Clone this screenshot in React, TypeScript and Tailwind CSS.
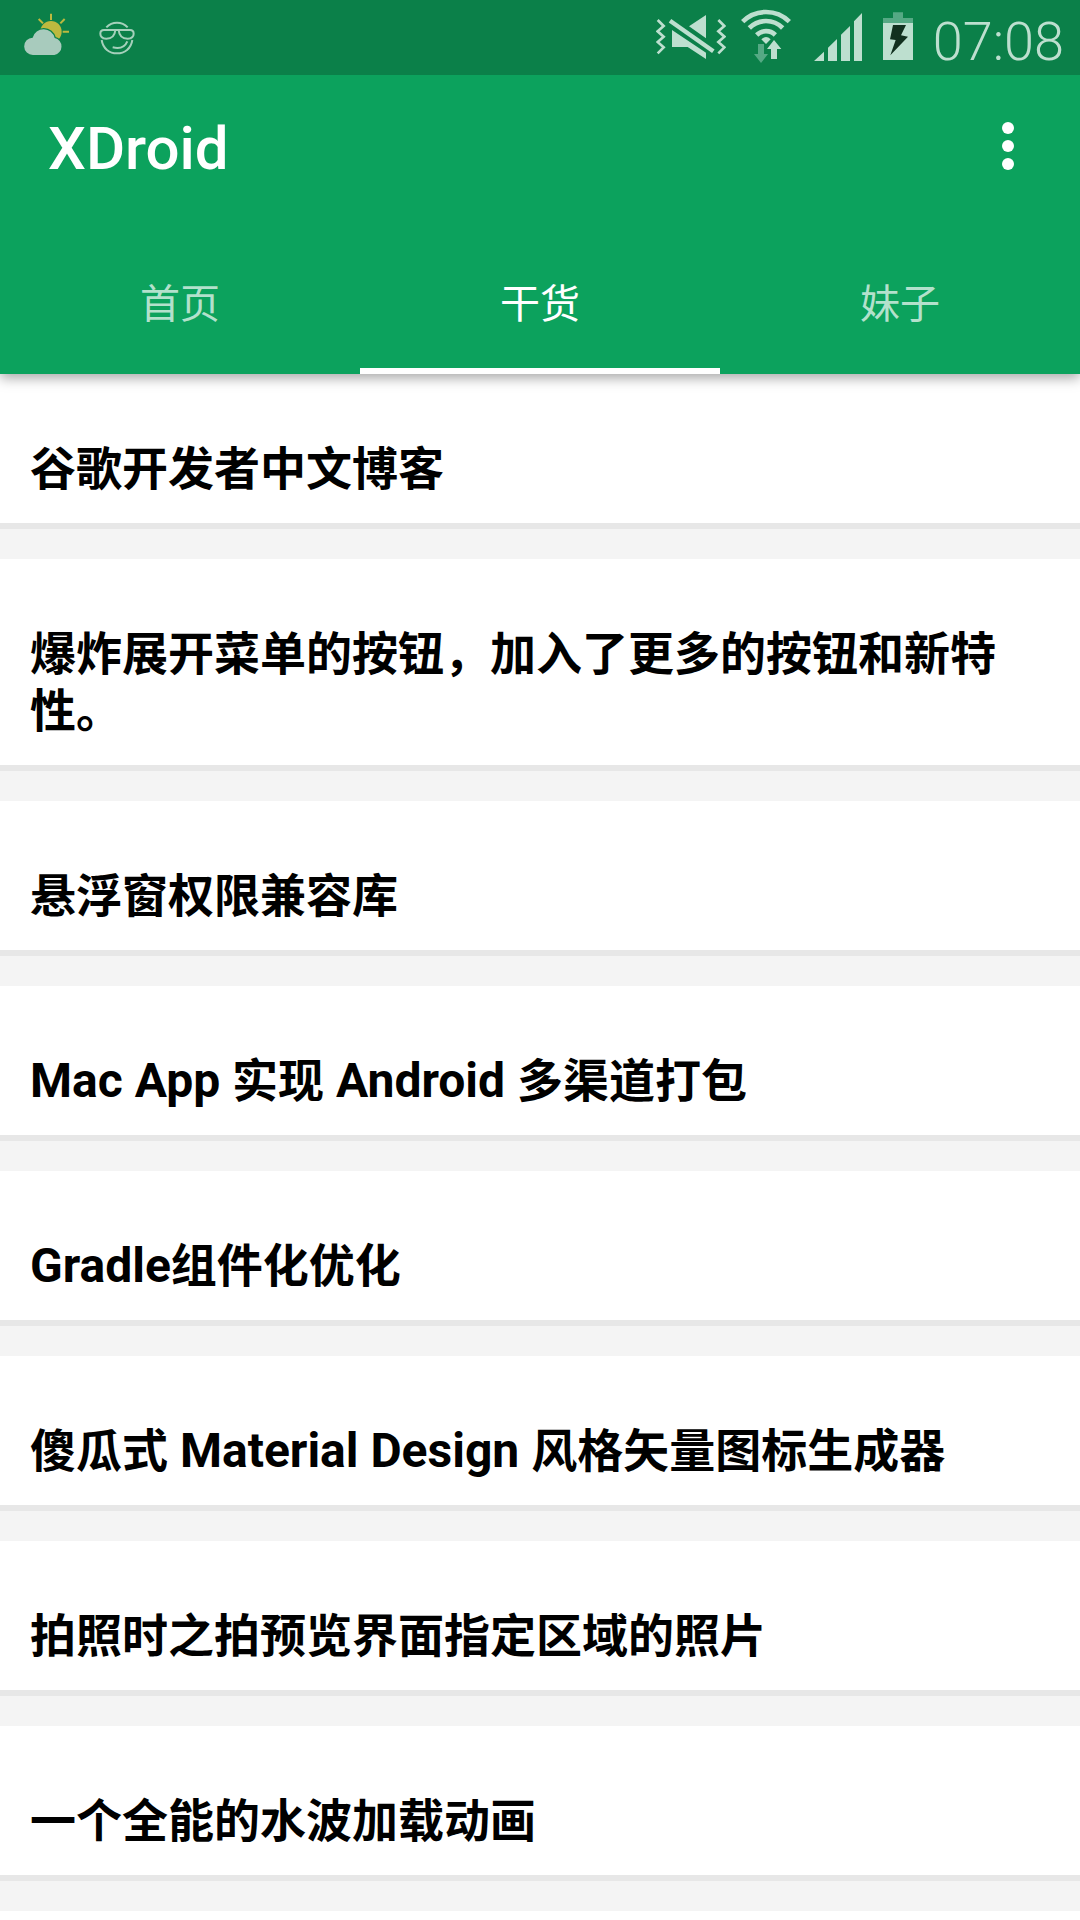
import { useState } from "react";

const articles = [
  "谷歌开发者中文博客",
  "爆炸展开菜单的按钮，加入了更多的按钮和新特性。",
  "悬浮窗权限兼容库",
  "Mac App 实现 Android 多渠道打包",
  "Gradle组件化优化",
  "傻瓜式 Material Design 风格矢量图标生成器",
  "拍照时之拍预览界面指定区域的照片",
  "一个全能的水波加载动画",
];

const tabs = ["首页", "干货", "妹子"];

function WeatherIcon() {
  return (
    <svg className="h-[75px] w-[46px]" viewBox="72 0 138 225" aria-hidden="true">
      <g stroke="#bdb93f" strokeWidth="6" fill="none">
        <path d="M153 41V60M116 57L129 70M194 57L181 70M188 95H207" />
      </g>
      <circle cx="153" cy="95" r="32" fill="#bdb93f" />
      <g fill="#a8cbbd" stroke="#0b8049" strokeWidth="8" paintOrder="stroke">
        <path d="M99 165a26 26 0 0 1-1-52a34 34 0 0 1 66 1a26 26 0 0 1-1 51z" />
      </g>
    </svg>
  );
}

function CoolFaceIcon() {
  return (
    <svg className="h-[75px] w-[36px]" viewBox="297 0 108 225" aria-hidden="true">
      <g fill="none" stroke="#a5d0bb" strokeWidth="6">
        <path d="M319 82Q332 68 351 68T383 82" />
        <path d="M305 120C309 146 328 160 351 160S393 146 397 120" />
        <path d="M301 101Q301 90 312 90H346Q344 116 319 116Q301 115 301 101Z" />
        <path d="M401 101Q401 90 390 90H356Q358 116 383 116Q401 115 401 101Z" />
        <path d="M344 90H358" />
        <path d="M338 142Q371 150 382 124" />
      </g>
    </svg>
  );
}

function MuteVibrateIcon() {
  return (
    <svg className="h-[75px] w-[70px]" viewBox="48 0 210 225" aria-hidden="true">
      <g fill="none" stroke="#bddfcf" strokeWidth="8">
        <path d="M53 60L71 78L53 94L71 110L53 126L71 142L53 160" />
        <path d="M235 60L253 78L235 94L253 110L235 126L253 142L235 160" />
      </g>
      <path d="M198 45V115L147 79ZM96 90L198 158V177L143 141H96Z" fill="#bddfcf" />
      <path d="M90 62L220 154" stroke="#0b8049" strokeWidth="21" />
      <path d="M90 62L220 154" stroke="#bddfcf" strokeWidth="13" />
    </svg>
  );
}

function WifiIcon() {
  return (
    <svg className="h-[75px] w-[50px]" viewBox="303 0 150 225" aria-hidden="true">
      <g fill="none" stroke="#bddfcf" strokeWidth="14">
        <path d="M308 65A99 99 0 0 1 448 65" />
        <path d="M328 84A70 70 0 0 1 428 84" />
        <path d="M350 105A40 40 0 0 1 406 105" />
      </g>
      <path d="M364 118Q378 104 392 118L378 132Z" fill="#bddfcf" />
      <path d="M354 132H372V162H384L363 189L342 162H354Z" fill="#55a984" />
      <path
        d="M402 120L424 147H411V177H393V147H381Z"
        fill="#bddfcf"
        stroke="#0b8049"
        strokeWidth="4"
        paintOrder="stroke"
      />
    </svg>
  );
}

function SignalIcon() {
  return (
    <svg className="h-[75px] w-[48px]" viewBox="42 0 144 225" aria-hidden="true">
      <path
        d="M42 183L72 155V183ZM84 183V143L111 117V183ZM123 183V104L150 78V183ZM162 183V64L186 39V183Z"
        fill="#bddfcf"
      />
    </svg>
  );
}

function BatteryIcon() {
  return (
    <svg className="h-[75px] w-[30px]" viewBox="249 0 90 225" aria-hidden="true">
      <path d="M279 37H309V54H339V69H249V54H279Z" fill="#55a984" />
      <path d="M249 69H339V180H249Z" fill="#bddfcf" />
      <path d="M279 75H318L303 106L324 110L271 166L287 120L270 118Z" fill="#12301f" />
    </svg>
  );
}

/** Latin runs are set slightly larger so that they balance the Chinese glyphs. */
function MixedText({ text }: { text: string }) {
  const runs = text.split(/([A-Za-z ]+)/).filter(Boolean);
  return (
    <>
      {runs.map((run, i) =>
        /^[A-Za-z ]+$/.test(run) ? (
          <span key={i} className="text-[48px] leading-none">
            {run}
          </span>
        ) : (
          run
        ),
      )}
    </>
  );
}

export default function App() {
  const [active, setActive] = useState(1);

  return (
    <div className="h-screen overflow-hidden bg-[#f4f4f4] font-['Roboto','Noto_Sans_CJK_SC',sans-serif]" lang="zh-CN">
      <header className="relative bg-[#0ca25d] text-white shadow-[0_4px_12px_rgba(0,0,0,0.35)]">
        <div className="flex h-[75px] items-center justify-between bg-[#0b8049] pr-4 pl-6">
          <div className="flex items-center gap-[29px]">
            <WeatherIcon />
            <CoolFaceIcon />
          </div>
          <div className="flex items-center">
            <MuteVibrateIcon />
            <div className="ml-[15px] flex">
              <WifiIcon />
            </div>
            <div className="ml-[23px] flex gap-[21px]">
              <SignalIcon />
              <BatteryIcon />
            </div>
            <time className="ml-5 pt-2 text-[54px] leading-none font-light text-[#bddfcf]">07:08</time>
          </div>
        </div>
        <div className="flex h-[142px] items-center justify-between px-12">
          <h1 className="pt-[6px] text-[60px] leading-none font-medium">XDroid</h1>
          <button type="button" aria-label="更多选项" className="flex h-24 w-12 items-center justify-center">
            <svg className="h-12 w-3" viewBox="0 0 12 48" fill="currentColor" aria-hidden="true">
              <circle cx="6" cy="6" r="6" />
              <circle cx="6" cy="24" r="6" />
              <circle cx="6" cy="42" r="6" />
            </svg>
          </button>
        </div>
        <nav role="tablist" className="mt-[13px] grid grid-cols-3">
          {tabs.map((tab, i) => (
            <button
              key={tab}
              type="button"
              role="tab"
              aria-selected={i === active}
              onClick={() => setActive(i)}
              className={
                i === active
                  ? "h-36 border-b-6 border-white pt-3 text-[40px] leading-none text-white"
                  : "h-36 border-b-6 border-transparent pt-3 text-[40px] leading-none text-white/70"
              }
            >
              {tab}
            </button>
          ))}
        </nav>
      </header>
      <main>
        <ul className="flex flex-col gap-[30px]">
          {articles.map((title) => (
            <li key={title} className="border-b-6 border-[#e7e7e7] bg-white px-[30px] pt-[67px] pb-[25px]">
              <h2 className="text-[46px] leading-[57px] font-bold text-black">
                <MixedText text={title} />
              </h2>
            </li>
          ))}
          <li className="h-[155px] bg-white" aria-hidden="true" />
        </ul>
      </main>
    </div>
  );
}
